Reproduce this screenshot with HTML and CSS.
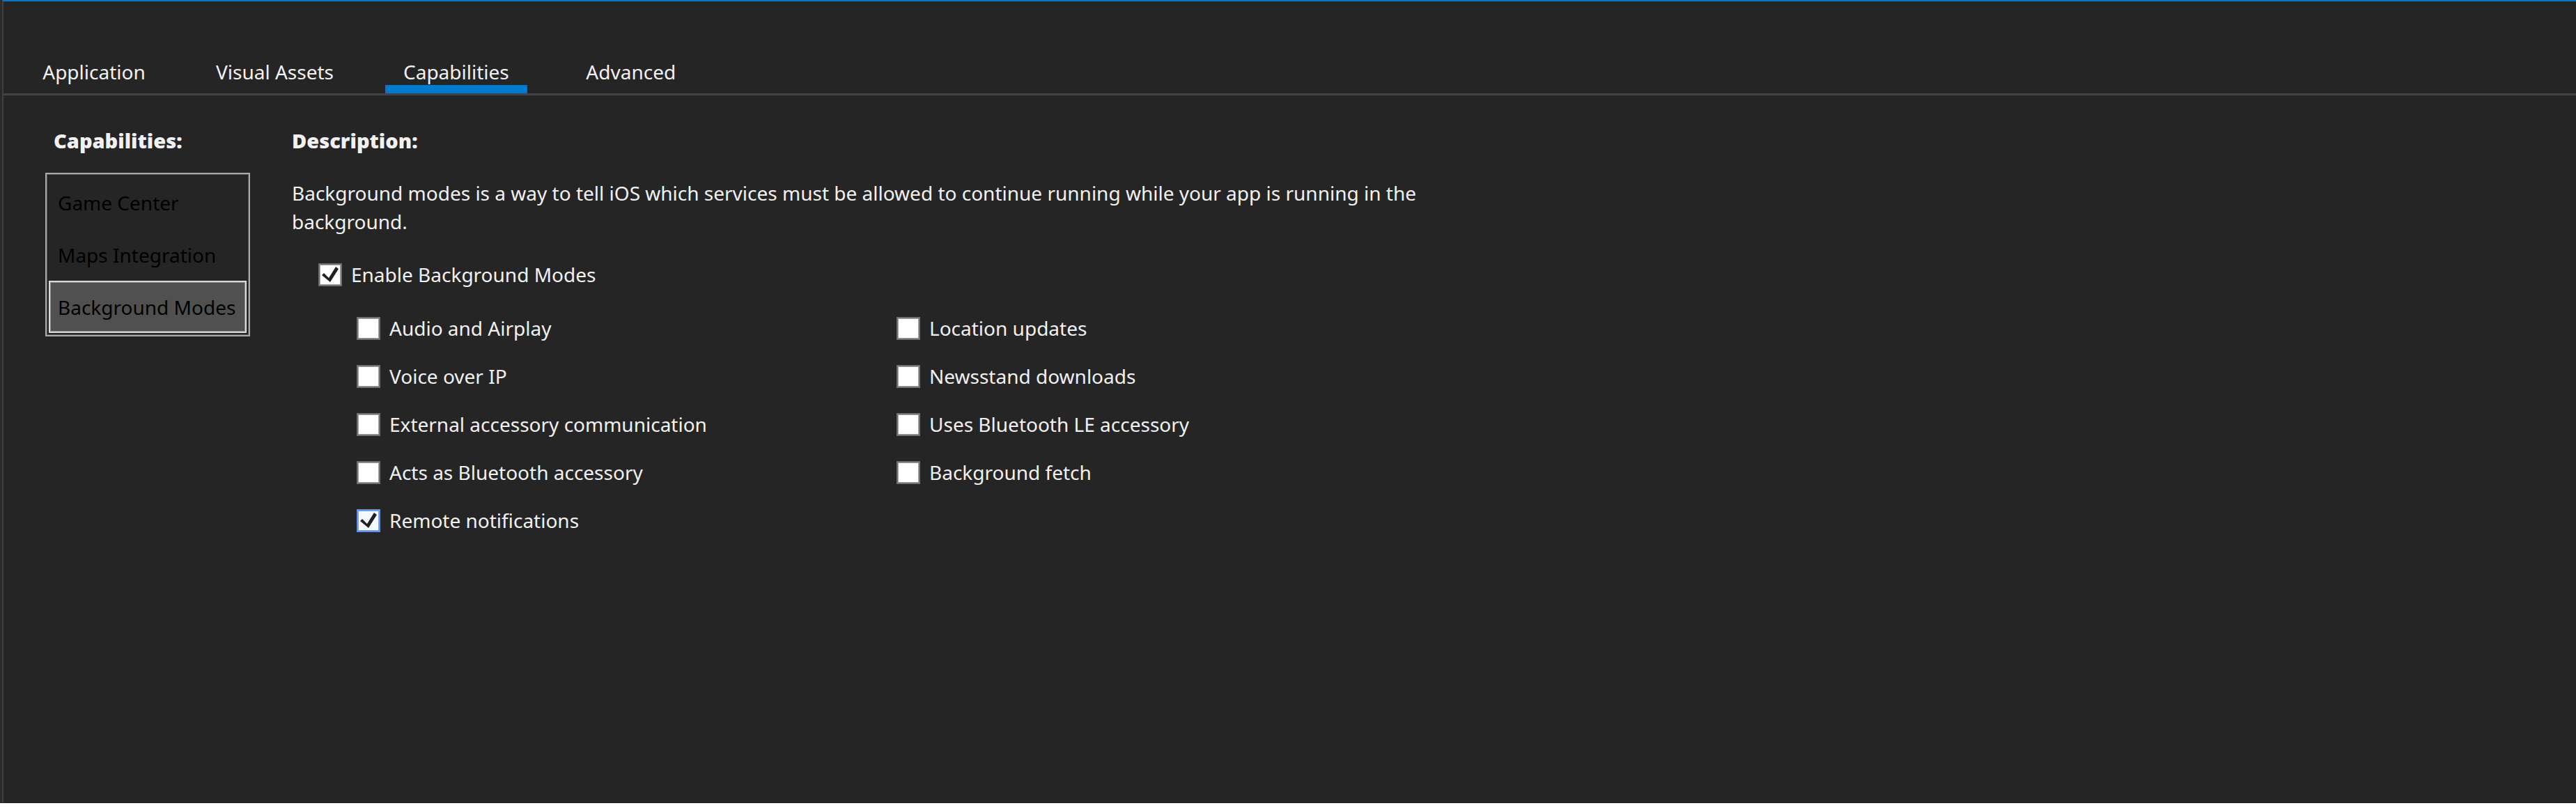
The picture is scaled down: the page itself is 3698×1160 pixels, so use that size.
FILE: index.html
```html
<!DOCTYPE html>
<html lang="en">
<head>
<meta charset="utf-8">
<meta name="viewport" content="width=device-width, initial-scale=1">
<title>Capabilities</title>
<link rel="stylesheet" href="styles.css">
</head>
<body>
<div class="window">
  <div class="editor">
    <nav class="tabs" role="tablist">
      <button class="tab" type="button" role="tab" aria-selected="false">Application</button>
      <button class="tab" type="button" role="tab" aria-selected="false">Visual Assets</button>
      <button class="tab" type="button" role="tab" aria-selected="true">Capabilities</button>
      <button class="tab" type="button" role="tab" aria-selected="false">Advanced</button>
    </nav>
    <main class="panel">
      <section class="sidebar">
        <h2 class="heading sidebar-heading" id="capabilities-label">Capabilities:</h2>
        <ul class="list" role="listbox" aria-labelledby="capabilities-label">
          <li class="list-item" role="option" aria-selected="false">Game Center</li>
          <li class="list-item" role="option" aria-selected="false">Maps Integration</li>
          <li class="list-item" role="option" aria-selected="true">Background Modes</li>
        </ul>
      </section>
      <section class="details">
        <h2 class="heading">Description:</h2>
        <p class="description">Background modes is a way to tell iOS which services must be allowed to continue running while your app is running in the background.</p>
        <label class="option option-main"><input class="check" type="checkbox" checked>Enable Background Modes</label>
        <div class="modes">
          <label class="option"><input class="check" type="checkbox">Audio and Airplay</label>
          <label class="option"><input class="check" type="checkbox">Location updates</label>
          <label class="option"><input class="check" type="checkbox">Voice over IP</label>
          <label class="option"><input class="check" type="checkbox">Newsstand downloads</label>
          <label class="option"><input class="check" type="checkbox">External accessory communication</label>
          <label class="option"><input class="check" type="checkbox">Uses Bluetooth LE accessory</label>
          <label class="option"><input class="check" type="checkbox">Acts as Bluetooth accessory</label>
          <label class="option"><input class="check" type="checkbox">Background fetch</label>
          <label class="option"><input class="check check-active" type="checkbox" checked>Remote notifications</label>
        </div>
      </section>
    </main>
  </div>
</div>
</body>
</html>
```
FILE: styles.css
```css
* {
  box-sizing: border-box;
}

body {
  margin: 0;
  background: #ffffff;
  color: #f1f1f1;
  font: 28px/40px "Noto Sans", "Open Sans", sans-serif;
}

.window {
  min-height: calc(100vh - 7px);
  padding-left: 3px;
  display: flex;
  background: #2a2a2c;
}

.editor {
  flex: 1;
  min-width: 0;
  background: #252526;
  border-top: 2px solid #007acc;
  border-left: 2px solid #3f3f46;
  border-bottom: 1px solid #2a2024;
}

.tabs {
  display: flex;
  gap: 48px;
  padding: 81px 0 0 29px;
  border-bottom: 3px solid #434346;
}

.tab {
  min-width: 202px;
  padding: 0 26px;
  height: 51px;
  display: flex;
  justify-content: center;
  border: 0;
  background: none;
  color: inherit;
  font: inherit;
  white-space: nowrap;
}

.tab[aria-selected="true"] {
  background: linear-gradient(#007acc, #007acc) bottom / 100% 12px no-repeat;
}

.panel {
  display: flex;
  align-items: flex-start;
  gap: 60px;
  padding: 45px 60px 60px;
}

.sidebar {
  flex: none;
  width: 294px;
}

.heading {
  margin: 0;
  font-family: "Open Sans", "Noto Sans", sans-serif;
  font-size: 29px;
  line-height: 40px;
  font-weight: 800;
}

.sidebar-heading {
  padding-left: 12px;
}

.list {
  margin: 26px 0 0;
  padding: 3px;
  list-style: none;
  border: 2px solid #a9a9ae;
  box-shadow: inset 0 0 0 1px #55555a;
  color: #000000;
}

.list-item {
  height: 75px;
  padding: 0 13px;
  line-height: 77px;
  white-space: nowrap;
}

.list-item[aria-selected="true"] {
  padding: 0 11px;
  line-height: 73px;
  border: 2px solid #dadada;
  box-shadow: inset 0 0 0 1px #8a8a8a;
  background: #505050;
}

.details {
  flex: 1;
  min-width: 0;
}

.description {
  max-width: 1650px;
  margin: 35px 0 0;
  line-height: 41px;
}

.option {
  display: flex;
  align-items: center;
  gap: 13px;
  justify-self: start;
}

.option-main {
  margin: 35px 0 0 38px;
}

.modes {
  display: grid;
  grid-template-columns: 775px 1fr;
  row-gap: 29px;
  padding: 37px 0 0 93px;
}

.check {
  appearance: none;
  flex: none;
  width: 34px;
  height: 33px;
  margin: 0;
  border: 2px solid #707070;
  box-shadow: inset 0 0 0 1px #a5a5a5;
  background: #ffffff;
}

.check:checked {
  background: #ffffff url("data:image/svg+xml,%3Csvg xmlns='http://www.w3.org/2000/svg' viewBox='0 0 34 33'%3E%3Cpath d='M5 17L8 14L15 21L25 5L29 8L17 27Z' fill='%23212121'/%3E%3C/svg%3E") border-box center / 34px 33px no-repeat;
}

.check-active:checked {
  border-color: #5593ff;
  background-color: #f3f9ff;
}
```
